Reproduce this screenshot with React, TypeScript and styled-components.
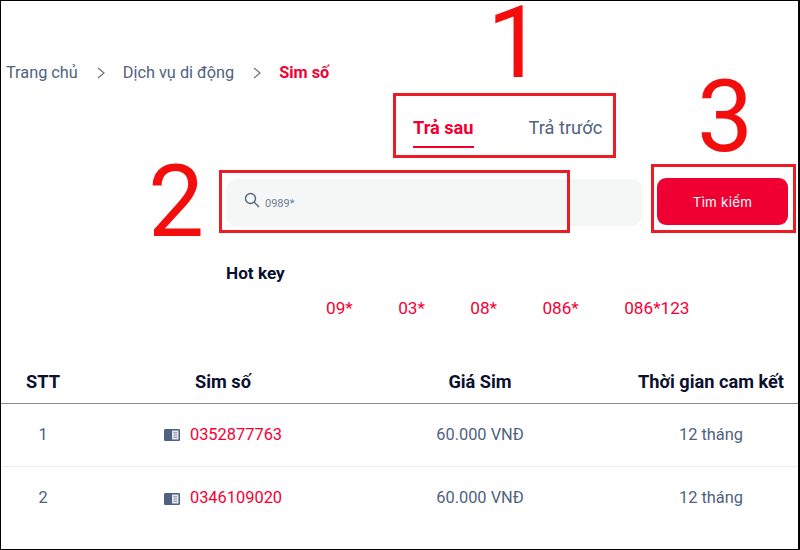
import React from "react";
import styled, { createGlobalStyle, css } from "styled-components";

const Global = createGlobalStyle`
  html, body { margin: 0; padding: 0; background: #fff; }
  body { font-family: Roboto, "Liberation Sans", sans-serif; }
`;

const Frame = styled.div`
  position: relative;
  box-sizing: border-box;
  width: 800px;
  height: 550px;
  overflow: hidden;
  background: #fff;
  border: solid #000;
  border-width: 1px 2px 1px 1px;
  padding-top: 61px;
  color: #4f6280;
`;

const Breadcrumb = styled.nav`
  display: flex;
  align-items: center;
  height: 20px;
  padding-left: 5px;
  font-size: 16.3px;
`;

const Crumb = styled.span<{ $current?: boolean }>`
  color: ${(p) => (p.$current ? "#f00032" : "#4f6280")};
  font-weight: ${(p) => (p.$current ? 700 : 400)};
`;

const Chevron = styled.svg`
  width: 8px;
  height: 12px;
  margin: 2px 18px 0 19px;
  fill: none;
  stroke: #6b7280;
  stroke-width: 1.2;
`;

const Tabs = styled.div`
  display: flex;
  gap: 55px;
  margin: 19px 0 0 412px;
  height: 47px;
`;

const Tab = styled.div<{ $active?: boolean }>`
  box-sizing: border-box;
  height: 47px;
  padding-top: 16px;
  font-size: 18.2px;
  line-height: 22px;
  font-weight: ${(p) => (p.$active ? 700 : 400)};
  color: ${(p) => (p.$active ? "#f00032" : "#4f6280")};
  border-bottom: ${(p) => (p.$active ? "2px solid #f00032" : "none")};
`;

const SearchRow = styled.div`
  display: flex;
  align-items: flex-start;
  gap: 15px;
  margin: 30px 0 0 225px;
`;

const SearchBox = styled.div`
  box-sizing: border-box;
  width: 416px;
  height: 47px;
  margin-top: 1px;
  display: flex;
  align-items: center;
  gap: 5px;
  padding-left: 18px;
  background: #f5f7f7;
  border-radius: 10px;
  font-size: 11px;
  color: #6f7f95;
`;

const SearchIcon = styled.svg`
  width: 16px;
  height: 16px;
  margin-top: -5px;
  fill: none;
  stroke: #55677f;
  stroke-width: 1.4;
`;

const SearchValue = styled.span`
  margin-top: 1px;
`;

const SearchButton = styled.button`
  width: 131px;
  height: 47px;
  border: 0;
  border-radius: 9px;
  background: #f00032;
  color: #fff;
  font-family: Inter, sans-serif;
  font-size: 13.4px;
  letter-spacing: 0.25px;
  font-weight: 400;
`;

const HotKeyTitle = styled.div`
  margin: 37px 0 0 225px;
  height: 20px;
  font-size: 17.2px;
  line-height: 20px;
  font-weight: 700;
  color: #0b1030;
`;

const HotKeys = styled.div`
  display: flex;
  gap: 45.4px;
  margin: 15px 0 0 325px;
  height: 20px;
  font-size: 17.2px;
  line-height: 20px;
  color: #f50033;
`;

const tableGrid = css`
  display: grid;
  grid-template-columns: 84px 276px 238px 1fr;
  align-items: center;
  box-sizing: border-box;
  text-align: center;
  & > :last-child { padding-left: 25px; }
`;

const TableHead = styled.div`
  ${tableGrid}
  margin-top: 45px;
  height: 41px;
  padding-bottom: 3px;
  border-bottom: 1px solid #8c8c8c;
  font-size: 18.2px;
  font-weight: 700;
  color: #0b1030;
`;

const TableBody = styled.div`
  display: flex;
  flex-direction: column;
`;

const Row = styled.div`
  ${tableGrid}
  height: 63px;
  padding-bottom: 2px;
  border-bottom: 1px solid #ececec;
  font-size: 16.4px;
  &:last-child { border-bottom: 0; }
`;

const SimCell = styled.div`
  display: flex;
  align-items: center;
  justify-content: center;
  gap: 10px;
`;

const SimNumber = styled.span`
  color: #f50033;
`;

const SimIcon = styled.svg`
  width: 16px;
  height: 12px;
  margin-top: 2px;
`;

const BigNumber = styled.div<{ $x: number; $y: number }>`
  position: absolute;
  left: ${(p) => p.$x}px;
  top: ${(p) => p.$y}px;
  font-family: Roboto, sans-serif;
  font-size: 100px;
  font-weight: 400;
  line-height: 84px;
  color: #f40d0d;
`;

const Callout = styled.div<{ $x: number; $y: number; $w: number; $h: number }>`
  position: absolute;
  box-sizing: border-box;
  left: ${(p) => p.$x}px;
  top: ${(p) => p.$y}px;
  width: ${(p) => p.$w}px;
  height: ${(p) => p.$h}px;
  border: 3px solid #ed1c24;
`;

const ChevronIcon = () => (
  <Chevron viewBox="0 0 8 12">
    <path d="M1 1l6 5-6 5" />
  </Chevron>
);

const Book = () => (
  <SimIcon viewBox="0 0 16 12">
    <rect width="16" height="12" rx="1.2" fill="#4f6280" />
    <rect x="8" y="1.5" width="6.5" height="9" fill="#e4e7ec" />
    <path d="M9.5 3.5h3.5M9.5 5.2h3.5M9.5 6.9h3.5M9.5 8.6h3.5" stroke="#8a95a5" strokeWidth="0.8" />
  </SimIcon>
);

const rows = [
  { n: 1, sim: "0352877763" },
  { n: 2, sim: "0346109020" },
];

export default function App() {
  return (
    <Frame>
      <Global />
      <Breadcrumb>
        <Crumb>Trang chủ</Crumb>
        <ChevronIcon />
        <Crumb>Dịch vụ di động</Crumb>
        <ChevronIcon />
        <Crumb $current>Sim số</Crumb>
      </Breadcrumb>
      <Tabs>
        <Tab $active>Trả sau</Tab>
        <Tab>Trả trước</Tab>
      </Tabs>
      <SearchRow>
        <SearchBox>
          <SearchIcon viewBox="0 0 16 16">
            <circle cx="6.5" cy="6.5" r="5" />
            <path d="M10.2 10.2L15 15" />
          </SearchIcon>
          <SearchValue>0989*</SearchValue>
        </SearchBox>
        <SearchButton>Tìm kiếm</SearchButton>
      </SearchRow>
      <HotKeyTitle>Hot key</HotKeyTitle>
      <HotKeys>
        <span>09*</span>
        <span>03*</span>
        <span>08*</span>
        <span>086*</span>
        <span>086*123</span>
      </HotKeys>
      <TableHead>
        <div>STT</div>
        <div>Sim số</div>
        <div>Giá Sim</div>
        <div>Thời gian cam kết</div>
      </TableHead>
      <TableBody>
        {rows.map((r) => (
          <Row key={r.n}>
            <div>{r.n}</div>
            <SimCell>
              <Book />
              <SimNumber>{r.sim}</SimNumber>
            </SimCell>
            <div>60.000 VNĐ</div>
            <div>12 tháng</div>
          </Row>
        ))}
      </TableBody>
      <Callout $x={392} $y={92} $w={223} $h={65} />
      <Callout $x={218} $y={169} $w={351} $h={63} />
      <Callout $x={650} $y={163} $w={145} $h={69} />
      <BigNumber $x={486} $y={0}>1</BigNumber>
      <BigNumber $x={147} $y={159}>2</BigNumber>
      <BigNumber $x={696} $y={74}>3</BigNumber>
    </Frame>
  );
}
